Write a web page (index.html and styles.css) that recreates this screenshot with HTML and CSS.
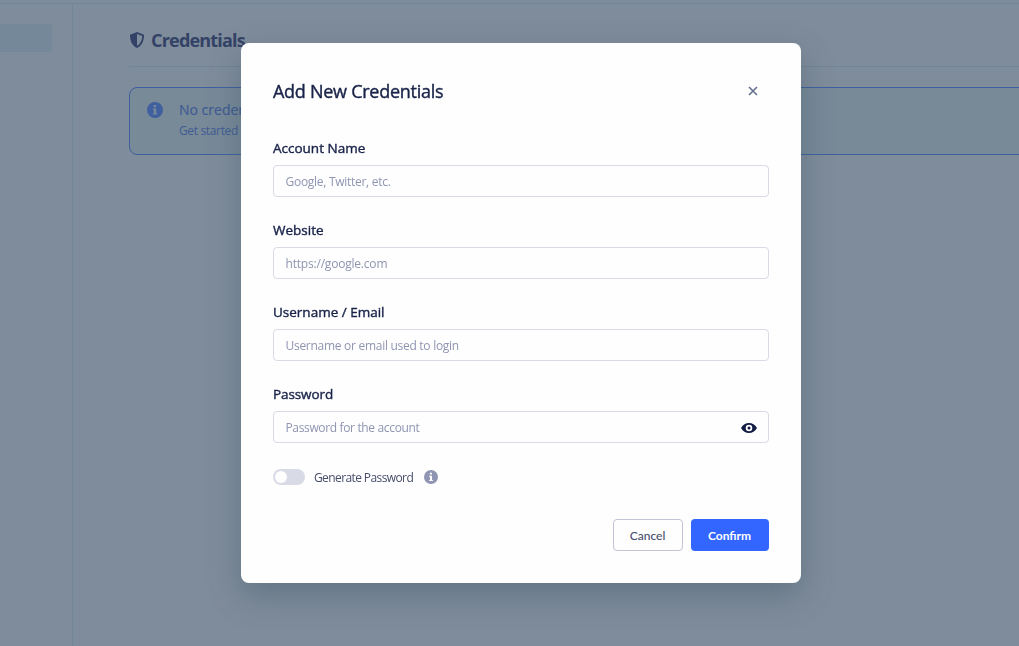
FILE: index.html
```
<!DOCTYPE html>
<html lang="en">
<head>
<meta charset="utf-8">
<title>Credentials</title>
<link rel="stylesheet" href="styles.css">
</head>
<body>
<div class="app">
  <aside class="sidebar"><div class="nav-active"></div></aside>
  <main class="content">
    <h1 class="page-title">
      <svg class="shield" viewBox="0 0 16 16"><path fill-rule="evenodd" d="M8 0 15 2.700C15 8.500 13.200 13.500 8 16 2.800 13.500 1 8.500 1 2.700ZM8 2V13.800C11.700 11.600 13 8 13.200 4Z"/></svg>
      <span>Credentials</span>
    </h1>
    <section class="notice">
      <svg class="notice-icon" viewBox="0 0 16 16"><path fill-rule="evenodd" d="M8 0a8 8 0 1 1 0 16A8 8 0 0 1 8 0ZM6.700 3v2.200h2.400V3ZM5.800 6.500v1.200h1v3.700h-1v1.200h4.400v-1.200h-1V6.500Z"/></svg>
      <div>
        <div class="notice-title">No credentials found</div>
        <div class="notice-text">Get started by adding new credentials</div>
      </div>
    </section>
  </main>
</div>
<div class="overlay">
  <form class="dialog">
    <header class="dialog-head">
      <h2 class="dialog-title">Add New Credentials</h2>
      <button class="close" type="button" aria-label="Close"><svg viewBox="0 0 10 10"><path d="M1 1 9 9M9 1 1 9"/></svg></button>
    </header>
    <label class="field"><span class="label">Account Name</span><span class="box"><input class="input" placeholder="Google, Twitter, etc."></span></label>
    <label class="field"><span class="label">Website</span><span class="box"><input class="input input-url" placeholder="https://google.com"></span></label>
    <label class="field"><span class="label">Username / Email</span><span class="box"><input class="input" placeholder="Username or email used to login"></span></label>
    <label class="field"><span class="label label-tight">Password</span><span class="box"><input class="input input-password" placeholder="Password for the account">
      <svg class="eye" viewBox="0 0 16 10"><path fill-rule="evenodd" d="M0 5C2 1.700 4.700 0 8 0s6 1.700 8 5c-2 3.300-4.700 5-8 5S2 8.300 0 5ZM8 1.700a3.300 3.300 0 1 0 0 6.600 3.300 3.300 0 0 0 0-6.600Z"/><circle cx="8" cy="5" r="1.500"/></svg></span></label>
    <div class="generate">
      <span class="switch"></span>
      <span class="generate-text">Generate Password</span>
      <svg class="info" viewBox="0 0 16 16"><path fill-rule="evenodd" d="M8 0a8 8 0 1 1 0 16A8 8 0 0 1 8 0ZM6.700 3v2.200h2.400V3ZM5.800 6.500v1.200h1v3.700h-1v1.200h4.400v-1.200h-1V6.500Z"/></svg>
    </div>
    <footer class="actions">
      <button class="btn cancel" type="button">Cancel</button>
      <button class="btn confirm" type="button">Confirm</button>
    </footer>
  </form>
</div>
</body>
</html>
```
FILE: styles.css
```
* { box-sizing: border-box; }
body { margin: 0; height: 646px; overflow: hidden; background: #7f8c9b; font-family: "Open Sans", "Noto Sans", sans-serif; }
.app { display: flex; height: 646px; padding-top: 3px; overflow: hidden; background: linear-gradient(#728594, #728594) 0 3px / 100% 1px no-repeat; }
.sidebar { flex: none; width: 73px; margin-top: 1px; padding-top: 20px; border-right: 1px solid #738695; }
.nav-active { width: 52px; height: 28px; border-radius: 0 4px 4px 0; background: #748899; }
.content { flex: none; width: 960px; padding: 21px 0 0 56px; }
.page-title { display: flex; align-items: center; gap: 6px; height: 43px; margin: 0; padding-bottom: 11px; border-bottom: 1px solid #728594; color: #334266; font-size: 18px; font-weight: 700; letter-spacing: -0.8px; }
.shield { width: 16px; height: 16px; fill: #334266; }
.notice { display: flex; height: 68px; margin-top: 20px; padding: 14px 17px; border: 1px solid #405f9f; border-radius: 8px; background: #788a98; color: #405b93; }
.notice-icon { flex: none; width: 16px; height: 16px; margin-right: 16px; fill: #405f9f; }
.notice-title { margin-top: -1px; font-size: 14px; line-height: 18px; -webkit-text-stroke: 0.2px; white-space: nowrap; }
.notice-text { margin-top: 2px; font-size: 12px; line-height: 20px; letter-spacing: -0.35px; white-space: nowrap; }
.overlay { position: fixed; inset: 0; display: flex; justify-content: center; align-items: flex-start; padding: 43px 0 0 23px; }
.dialog { width: 560px; height: 540px; padding: 32px; border-radius: 8px; background: #fefefe; box-shadow: 0 12px 32px rgba(58, 84, 97, .42); }
.dialog-head { display: flex; justify-content: space-between; align-items: center; height: 32px; margin-bottom: 32px; }
.dialog-title { margin: 0; color: #192349; font-size: 18px; font-weight: 400; letter-spacing: -0.27px; -webkit-text-stroke: 0.4px; }
.close { display: flex; align-items: center; justify-content: center; width: 32px; height: 32px; padding: 0; border: 0; background: transparent; }
.close svg { width: 10px; height: 10px; fill: none; stroke: #687391; stroke-width: 1.7; }
.field { display: block; height: 82px; }
.label { display: block; height: 26px; color: #192349; font-size: 13.5px; line-height: 18px; font-weight: 400; letter-spacing: 0; -webkit-text-stroke: 0.4px; }
.label-tight { letter-spacing: -0.1px; }
.box { display: flex; align-items: center; height: 32px; padding: 0 11px; border: 1px solid #d8dae5; border-radius: 4px; }
.input { flex: 1; min-width: 0; height: 30px; padding: 0 0 0 1px; margin-left: -0.5px; border: 0; outline: 0; background: transparent; font: 12px "Open Sans", sans-serif; letter-spacing: -0.28px; }
.input-url { letter-spacing: -0.2px; }
.input-password { letter-spacing: -0.35px; }
.input::placeholder { color: #8f95b2; opacity: 1; }
.eye { width: 16px; height: 10px; margin-top: 2px; fill: #121b42; }
.generate { display: flex; align-items: center; height: 16px; margin-top: 2px; }
.switch { width: 32px; height: 16px; padding: 2px; border-radius: 8px; background: #d8dae5; }
.switch::before { content: ""; display: block; width: 12px; height: 12px; border-radius: 50%; background: #fff; }
.generate-text { width: 100px; margin: 2px 10px 0 9px; color: #474d6c; font-size: 12px; line-height: 16px; letter-spacing: -0.6px; white-space: nowrap; }
.info { width: 14px; height: 14px; fill: #8f95b2; }
.actions { display: flex; justify-content: flex-end; gap: 8px; margin-top: 34px; }
.btn { height: 32px; padding: 0 1px 0 0; border-radius: 4px; font-family: Lato, sans-serif; font-size: 12px; }
.cancel { width: 70px; border: 1px solid #c1c4d6; background: #fefefe; color: #474d6c; font-weight: 500; }
.confirm { width: 78px; border: 0; background: #3366ff; color: #fff; font-weight: 700; }
```
